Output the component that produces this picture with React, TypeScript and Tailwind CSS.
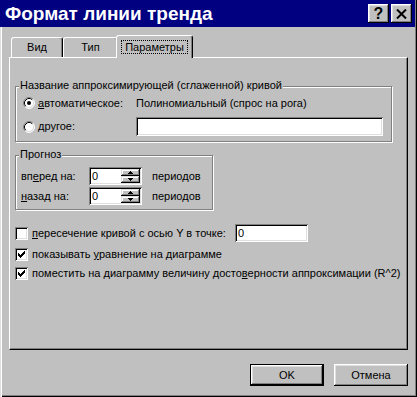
import React from "react";

const raised =
  "shadow-[inset_-1px_-1px_#000,inset_1px_1px_#fff,inset_-2px_-2px_#808080,inset_2px_2px_#dfdfdf]";
const sunken =
  "shadow-[inset_1px_1px_#808080,inset_-1px_-1px_#fff,inset_2px_2px_#000,inset_-2px_-2px_#dfdfdf]";

const checkPixels: [number, number][] = [
  [6, 0],
  [5, 1], [6, 1],
  [0, 2], [4, 2], [5, 2], [6, 2],
  [0, 3], [1, 3], [3, 3], [4, 3], [5, 3],
  [0, 4], [1, 4], [2, 4], [3, 4], [4, 4],
  [1, 5], [2, 5], [3, 5],
  [2, 6],
];

function Checkbox({ checked }: { checked?: boolean }) {
  return (
    <div className={`w-[13px] h-[13px] shrink-0 bg-white flex items-center justify-center ${sunken}`}>
      {checked && (
        <svg width="7" height="7" viewBox="0 0 7 7" shapeRendering="crispEdges">
          {checkPixels.map(([x, y]) => (
            <rect key={`${x}-${y}`} x={x} y={y} width="1" height="1" fill="#000" />
          ))}
        </svg>
      )}
    </div>
  );
}

function Radio({ checked }: { checked?: boolean }) {
  return (
    <svg width="12" height="12" viewBox="0 0 12 12" className="shrink-0">
      <circle cx="6" cy="6" r="5" fill="#fff" />
      <path d="M2.11 9.89 A5.5 5.5 0 0 1 9.89 2.11" stroke="#808080" strokeWidth="1" fill="none" />
      <path d="M9.89 2.11 A5.5 5.5 0 0 1 2.11 9.89" stroke="#fff" strokeWidth="1" fill="none" />
      <path d="M2.82 9.18 A4.5 4.5 0 0 1 9.18 2.82" stroke="#000" strokeWidth="1" fill="none" />
      <path d="M9.18 2.82 A4.5 4.5 0 0 1 2.82 9.18" stroke="#dfdfdf" strokeWidth="1" fill="none" />
      {checked && <circle cx="6" cy="6" r="2" fill="#000" />}
    </svg>
  );
}

function Group({
  label,
  className,
  children,
}: {
  label: React.ReactNode;
  className: string;
  children: React.ReactNode;
}) {
  return (
    <div className={`relative border border-[#808080] shadow-[inset_1px_1px_#fff,1px_1px_#fff] ${className}`}>
      <span className="absolute left-[3px] top-[-8px] bg-[#c0c0c0] px-[1px] leading-[13px] whitespace-nowrap">
        {label}
      </span>
      {children}
    </div>
  );
}

function SpinBox() {
  return (
    <div className={`flex w-[53px] h-[18px] bg-white p-[2px] ${sunken}`}>
      <div className="flex-1 pl-[1px] leading-[14px]">0</div>
      <div className="flex flex-col w-[19px]">
        <div className="flex-1 bg-[#c0c0c0] flex items-center justify-center shadow-[inset_-1px_-1px_#000,inset_1px_1px_#dfdfdf,inset_-2px_-2px_#808080,inset_2px_2px_#fff]">
          <svg width="5" height="3" viewBox="0 0 5 3" shapeRendering="crispEdges">
            <path d="M2 0h1v1h1v1h1v1H0V2h1V1h1z" fill="#000" />
          </svg>
        </div>
        <div className="flex-1 bg-[#c0c0c0] flex items-center justify-center shadow-[inset_-1px_-1px_#000,inset_1px_1px_#dfdfdf,inset_-2px_-2px_#808080,inset_2px_2px_#fff]">
          <svg width="5" height="3" viewBox="0 0 5 3" shapeRendering="crispEdges">
            <path d="M0 0h5v1H4v1H3v1H2V2H1V1H0z" fill="#000" />
          </svg>
        </div>
      </div>
    </div>
  );
}

export default function App() {
  return (
    <div className="relative w-[417px] h-[397px] overflow-hidden bg-[#c0c0c0] text-black text-[11px] leading-[13px] font-['Liberation_Sans',Arial,sans-serif] shadow-[inset_1px_0_#dfdfdf,inset_2px_0_#fff,inset_-1px_-1px_#000,inset_-2px_-2px_#808080] flex flex-col">
      {/* Title bar */}
      <div className="h-[27px] mr-[2px] bg-[#000080] flex items-center pl-[5px] pr-[3px] shrink-0">
        <div className="flex-1 text-white font-bold text-[19px] leading-none whitespace-nowrap">
          Формат линии тренда
        </div>
        <div className="flex gap-[2px]">
          <div className={`w-[21px] h-[19px] bg-[#c0c0c0] flex items-center justify-center ${raised}`}>
            <span className="font-bold text-[16px] leading-none text-black">?</span>
          </div>
          <div className={`w-[21px] h-[19px] bg-[#c0c0c0] flex items-center justify-center ${raised}`}>
            <svg width="11" height="10" viewBox="0 0 11 10">
              <path d="M1 0.5 L10 9.5 M10 0.5 L1 9.5" stroke="#000" strokeWidth="2" />
            </svg>
          </div>
        </div>
      </div>

      {/* Body */}
      <div className="pl-[9px] pt-[8px] flex flex-col">
        {/* Tabs */}
        <div className="flex items-end h-[22px] pl-[2px] relative z-10">
          <div className="w-[52px] h-[20px] flex items-center justify-center border-l border-t border-white border-r border-r-black rounded-t-[3px] shadow-[inset_-1px_0_#808080]">
            Вид
          </div>
          <div className="w-[55px] h-[20px] flex items-center justify-center border-l border-t border-white border-r border-r-black rounded-t-[3px] shadow-[inset_-1px_0_#808080]">
            Тип
          </div>
          <div className="-ml-[2px] w-[77px] h-[23px] -mb-[1px] bg-[#c0c0c0] flex items-start justify-center pt-[4px] border-l border-t border-white border-r border-r-black rounded-t-[3px] shadow-[inset_-1px_0_#808080]">
            <span className="border border-dotted border-black px-[3px] h-[14px] leading-[12px]">Параметры</span>
          </div>
        </div>

        {/* Panel */}
        <div className="w-[399px] h-[293px] border-t border-l border-white border-r border-b border-r-black border-b-black shadow-[inset_-1px_-1px_#808080] pt-[28px] pl-[5px] flex flex-col">
          <Group label="Название аппроксимирующей (сглаженной) кривой" className="w-[377px] h-[56px] pt-[8px] pl-[7px] pr-[7px]">
            <div className="h-[16px] flex items-center">
              <div className="w-[113px] flex items-center gap-[3px]">
                <Radio checked />
                <span>
                  <span className="underline">а</span>втоматическое:
                </span>
              </div>
              <span>Полиномиальный (спрос на рога)</span>
            </div>
            <div className="mt-[6px] h-[19px] flex items-center">
              <div className="w-[113px] flex items-center gap-[3px]">
                <Radio />
                <span>
                  <span className="underline">д</span>ругое:
                </span>
              </div>
              <div className={`w-[247px] h-[19px] bg-white ${sunken}`} />
            </div>
          </Group>

          <Group label="Прогноз" className="mt-[13px] w-[198px] h-[55px] pt-[11px] pl-[5px]">
            <div className="h-[18px] flex items-center">
              <span className="w-[68px]">
                вп<span className="underline">е</span>ред на:
              </span>
              <SpinBox />
              <span className="ml-[10px]">периодов</span>
            </div>
            <div className="mt-[2px] h-[18px] flex items-center">
              <span className="w-[68px]">
                <span className="underline">н</span>азад на:
              </span>
              <SpinBox />
              <span className="ml-[10px]">периодов</span>
            </div>
          </Group>

          <div className="mt-[14px] h-[18px] flex items-center">
            <Checkbox />
            <span className="ml-[4px] w-[203px]">
              <span className="underline">п</span>ересечение кривой с осью Y в точке:
            </span>
            <div className={`w-[73px] h-[18px] bg-white pl-[3px] leading-[18px] ${sunken}`}>0</div>
          </div>
          <div className="mt-[6px] h-[13px] flex items-center">
            <Checkbox checked />
            <span className="ml-[4px]">
              показывать <span className="underline">у</span>равнение на диаграмме
            </span>
          </div>
          <div className="mt-[6px] h-[13px] flex items-center">
            <Checkbox checked />
            <span className="ml-[4px] whitespace-nowrap">
              поместить на диаграмму величину досто<span className="underline">в</span>ерности аппроксимации (R^2)
            </span>
          </div>
        </div>

        {/* Buttons */}
        <div className="w-[399px] mt-[14px] flex justify-end gap-[10px]">
          <div className="w-[74px] h-[22px] border border-black">
            <div className={`w-full h-full flex items-center justify-center ${raised}`}>OK</div>
          </div>
          <div className={`w-[74px] h-[22px] flex items-center justify-center ${raised}`}>Отмена</div>
        </div>
      </div>
    </div>
  );
}
